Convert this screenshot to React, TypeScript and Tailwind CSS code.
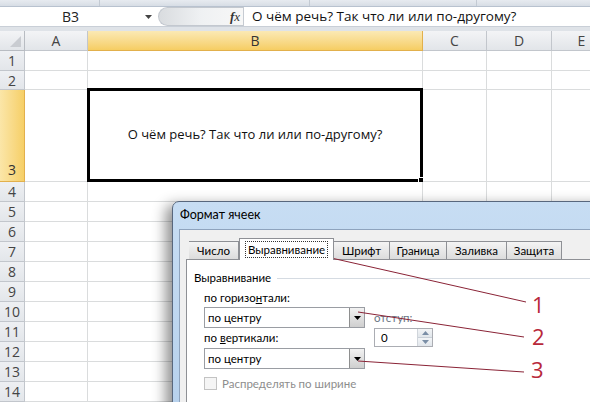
import React from "react";

const COLS = [
  { name: "A", w: 63 },
  { name: "B", w: 335, sel: true },
  { name: "C", w: 64 },
  { name: "D", w: 65 },
  { name: "E", w: 60 },
];

const ROWS = [
  { n: 1, h: 20 },
  { n: 2, h: 19 },
  { n: 3, h: 92, sel: true },
  { n: 4, h: 20 },
  { n: 5, h: 20 },
  { n: 6, h: 20 },
  { n: 7, h: 20 },
  { n: 8, h: 20 },
  { n: 9, h: 20 },
  { n: 10, h: 20 },
  { n: 11, h: 20 },
  { n: 12, h: 20 },
  { n: 13, h: 20 },
  { n: 14, h: 20 },
];

const TEXT = "О чём речь? Так что ли или по-другому?";

function DropBtn() {
  return (
    <div className="w-[15px] h-full border-l border-[#8e8f8f] bg-gradient-to-b from-[#f2f2f2] to-[#cfcfcf] flex items-center justify-center">
      <svg width="7" height="4" viewBox="0 0 7 4">
        <path d="M0 0 L7 0 L3.5 4 Z" fill="#000" />
      </svg>
    </div>
  );
}

function Select() {
  return (
    <div className="w-[161px] h-[21px] border border-[#9a9da3] bg-white flex items-stretch">
      <div className="flex-1 pl-[3px] flex items-center">по центру</div>
      <DropBtn />
    </div>
  );
}

const tabCls =
  "h-[18px] border border-b-0 border-l-0 border-[#8e9095] bg-gradient-to-b from-[#f4f4f4] to-[#dcdcdc] flex items-center justify-center";

export default function App() {
  return (
    <div
      className="relative w-[590px] h-[402px] overflow-hidden bg-white text-[#222]"
      style={{ fontFamily: '"Open Sans", "Noto Sans", sans-serif' }}
    >
      {/* ribbon remnant */}
      <div className="h-[7px] bg-gradient-to-b from-[#e7ebf0] to-[#d7dde5] border-b border-[#b8c2cf] flex">
        <div className="w-[100px] border-r border-[#c3cad3]" />
        <div className="w-[210px] border-r border-[#c3cad3]" />
        <div className="w-[167px] border-r border-[#c3cad3]" />
      </div>
      {/* formula bar */}
      <div className="h-[20px] flex items-stretch bg-white border-b border-[#c9cfd7]">
        <div className="w-[158px] relative flex items-center">
          <span className="absolute left-[62px] text-[14px] leading-none">B3</span>
          <svg className="absolute left-[145px] top-[8px]" width="7" height="4" viewBox="0 0 7 4">
            <path d="M0 0 L7 0 L3.5 4 Z" fill="#444" />
          </svg>
        </div>
        <div className="w-[85px] rounded-l-full border-l border-t border-b border-[#c3c8cf] bg-gradient-to-r from-[#d9dcdf] via-[#eff1f3] to-[#f7f7f7] flex items-center justify-end pr-[3px]">
          <span
            className="italic text-[13px] leading-none text-[#333]"
            style={{ fontFamily: '"Liberation Serif", serif' }}
          >
            <b>f</b>x
          </span>
        </div>
        <div className="w-px bg-[#c6cbd2]" />
        <div className="flex-1 pl-[8px] flex items-center text-[13.5px] leading-none text-[#111]">{TEXT}</div>
      </div>
      <div className="h-[4px] bg-[#dfe3e8]" />
      {/* column headers */}
      <div className="flex h-[20px]">
        <div className="w-[25px] shrink-0 bg-gradient-to-b from-[#f3f4f6] to-[#e2e5e9] border-r border-b border-[#b8bcc2] relative">
          <svg className="absolute right-[3px] bottom-[3px]" width="11" height="11" viewBox="0 0 11 11">
            <path d="M11 0 L11 11 L0 11 Z" fill="#c9ccd1" />
          </svg>
        </div>
        {COLS.map((c) => (
          <div
            key={c.name}
            style={{ width: c.w }}
            className={
              c.sel
                ? "shrink-0 flex items-center justify-center text-[14px] text-[#333] bg-gradient-to-b from-[#fbe9b4] to-[#f6cd62] border-r border-b border-[#e2b04c]"
                : "shrink-0 flex items-center justify-center text-[14px] text-[#444] bg-gradient-to-b from-[#f3f4f6] to-[#e2e5e9] border-r border-b border-[#c2c6cc]"
            }
          >
            {c.name}
          </div>
        ))}
      </div>
      {/* rows */}
      {ROWS.map((r) => (
        <div key={r.n} className="flex" style={{ height: r.h }}>
          <div
            className={
              r.sel
                ? "w-[25px] shrink-0 flex items-end justify-center pb-[1px] text-[14px] text-[#333] bg-gradient-to-r from-[#fbe6a8] to-[#f6cf66] border-r border-b border-[#e2b04c]"
                : "w-[25px] shrink-0 flex items-center justify-center text-[14px] text-[#444] bg-gradient-to-b from-[#eef0f3] to-[#e3e6ea] border-r border-b border-[#c2c6cc]"
            }
          >
            {r.n}
          </div>
          {COLS.map((c) => (
            <div
              key={c.name}
              style={{ width: c.w }}
              className="shrink-0 border-r border-b border-[#dadcdd] relative"
            >
              {r.sel && c.name === "B" && (
                <div className="absolute -left-[1px] -top-[2px] right-[-1px] bottom-[-1px] border-[3px] border-black flex items-center justify-center text-[13px] text-[#111]">
                  {TEXT}
                  <div className="absolute -right-[4px] -bottom-[4px] w-[6px] h-[6px] bg-black border border-white" />
                </div>
              )}
            </div>
          ))}
        </div>
      ))}

      {/* dialog */}
      <div
        className="absolute left-[172px] top-[201px] w-[440px] h-[230px] rounded-tl-[7px] border border-[#58677d] bg-gradient-to-b from-[#c7ddf3] to-[#b5d0ec] shadow-[-6px_4px_14px_rgba(0,0,0,0.45)] text-[11.5px] text-black"
        style={{ fontFamily: 'Lato, "Open Sans", sans-serif' }}
      >
        <div className="h-[27px] pl-[7px] flex items-center text-[12.5px]">Формат ячеек</div>
        <div className="ml-[6px] h-full border-l border-t border-[#8ea3bd] bg-[#f0f0f0] pl-[6px] pt-[5px]">
          {/* tabs */}
          <div className="flex items-end h-[24px] pl-[3px]">
            <div className={"w-[50px] border-l " + tabCls}>Число</div>
            <div className="w-[95px] h-[22px] -mb-px relative z-10 border border-b-0 border-[#8e9095] bg-white flex items-center justify-center">
              <span className="outline-1 outline-dotted outline-[#333] px-[2px] leading-[15px]">Выравнивание</span>
            </div>
            <div className={"w-[56px] " + tabCls}>Шрифт</div>
            <div className={"w-[57px] " + tabCls}>Граница</div>
            <div className={"w-[60px] " + tabCls}>Заливка</div>
            <div className={"w-[55px] " + tabCls}>Защита</div>
          </div>
          {/* panel */}
          <div className="h-[200px] border border-[#8e9095] bg-white pt-[11px] pl-[7px]">
            <div className="flex items-center h-[14px]">
              <span>Выравнивание</span>
              <div className="flex-1 h-px bg-[#d5dbe2] ml-[6px]" />
            </div>
            <div className="flex pl-[10px] mt-[6px]">
              <div className="flex flex-col">
                <div className="h-[14px] leading-[14px]">
                  по горизо<span className="underline">н</span>тали:
                </div>
                <div className="mt-[2px]">
                  <Select />
                </div>
                <div className="h-[14px] leading-[14px] mt-[3px]">
                  по <span className="underline">в</span>ертикали:
                </div>
                <div className="mt-[3px]">
                  <Select />
                </div>
                <div className="flex items-center mt-[8px] h-[13px]">
                  <div className="w-[13px] h-[13px] border border-[#c3c3c3] bg-[#f5f5f5]" />
                  <span className="ml-[5px] text-[#8d8d8d]">Распределять по ширине</span>
                </div>
              </div>
              <div className="ml-[9px] pt-[20px] flex flex-col">
                <div className="h-[14px] leading-[14px] text-[#6a7685]">отступ:</div>
                <div className="mt-[3px] w-[59px] h-[19px] border border-[#abadb3] bg-white flex">
                  <div className="flex-1 pl-[6px] flex items-center">0</div>
                  <div className="w-[15px] flex flex-col border-l border-[#d0d5db]">
                    <div className="flex-1 bg-gradient-to-b from-[#f3f5f7] to-[#e1e6eb] border-b border-[#c9d0d8] flex items-center justify-center">
                      <svg width="7" height="4" viewBox="0 0 7 4">
                        <path d="M0 4 L7 4 L3.5 0 Z" fill="#7a8ea6" />
                      </svg>
                    </div>
                    <div className="flex-1 bg-gradient-to-b from-[#f3f5f7] to-[#e1e6eb] flex items-center justify-center">
                      <svg width="7" height="4" viewBox="0 0 7 4">
                        <path d="M0 0 L7 0 L3.5 4 Z" fill="#7a8ea6" />
                      </svg>
                    </div>
                  </div>
                </div>
              </div>
            </div>
            <div className="flex items-center h-[14px] mt-[11px]">
              <span>Отображение</span>
              <div className="flex-1 h-px bg-[#d5dbe2] ml-[6px]" />
            </div>
          </div>
        </div>
      </div>

      {/* annotations */}
      <svg className="absolute inset-0 pointer-events-none" width="590" height="402" viewBox="0 0 590 402">
        <line x1="318" y1="255" x2="526" y2="302" stroke="#8a2336" strokeWidth="1" />
        <line x1="358" y1="312" x2="524" y2="337" stroke="#8a2336" strokeWidth="1" />
        <line x1="358" y1="361" x2="524" y2="372" stroke="#8a2336" strokeWidth="1" />
      </svg>
      <span
        className="absolute left-[532px] top-[293px] text-[22px] leading-none text-[#b8283a]"
        style={{ fontFamily: '"Open Sans", sans-serif' }}
      >
        1
      </span>
      <span
        className="absolute left-[532px] top-[325px] text-[22px] leading-none text-[#b8283a]"
        style={{ fontFamily: '"Open Sans", sans-serif' }}
      >
        2
      </span>
      <span
        className="absolute left-[531px] top-[358px] text-[22px] leading-none text-[#b8283a]"
        style={{ fontFamily: '"Open Sans", sans-serif' }}
      >
        3
      </span>
    </div>
  );
}
